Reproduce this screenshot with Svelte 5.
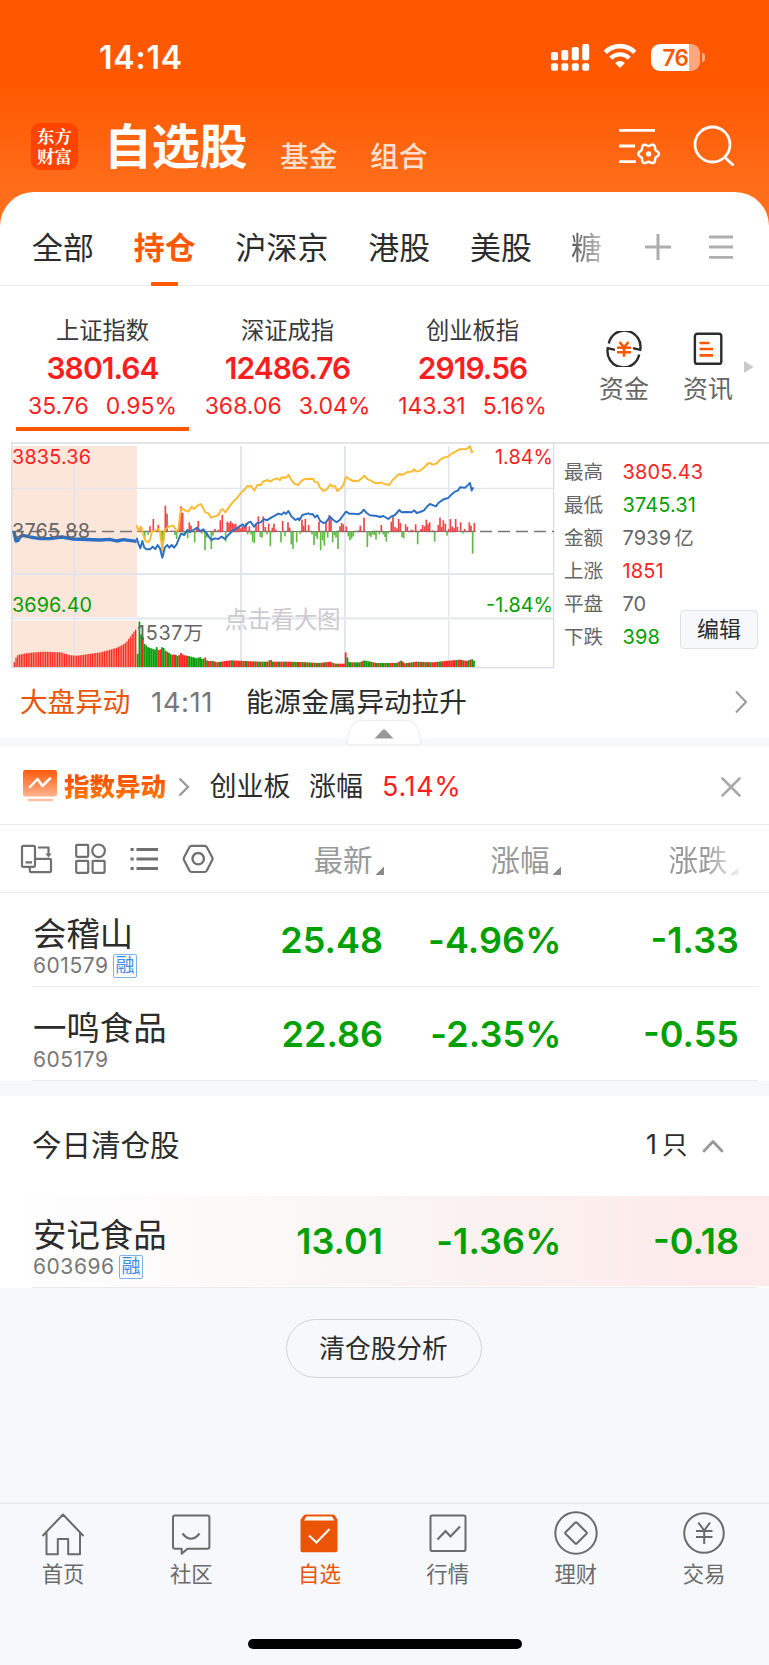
<script>
  const tabs = ['全部', '持仓', '沪深京', '港股', '美股', '糖'];
  const indices = [
    { name: '上证指数', value: '3801.64', diff: '35.76', pct: '0.95%' },
    { name: '深证成指', value: '12486.76', diff: '368.06', pct: '3.04%' },
    { name: '创业板指', value: '2919.56', diff: '143.31', pct: '5.16%' }
  ];
  const stats = [
    ['最高', '3805.43', 'up'],
    ['最低', '3745.31', 'down'],
    ['金额', '7939', '', '亿'],
    ['上涨', '1851', 'up'],
    ['平盘', '70', ''],
    ['下跌', '398', 'down']
  ];
  const holdings = [
    { name: '会稽山', code: '601579', margin: true, price: '25.48', pct: '-4.96%', diff: '-1.33' },
    { name: '一鸣食品', code: '605179', margin: false, price: '22.86', pct: '-2.35%', diff: '-0.55' }
  ];
  const cleared = { name: '安记食品', code: '603696', margin: true, price: '13.01', pct: '-1.36%', diff: '-0.18' };
  const nav = ['首页', '社区', '自选', '行情', '理财', '交易'];

  // Six-lobed gear outline centred on (cx, cy)
  function gear(cx, cy) {
    return Array.from({ length: 72 }, (_, i) => {
      const a = (i * Math.PI) / 36;
      const r = 9.1 + 1.2 * Math.cos(6 * a);
      return (cx + r * Math.cos(a)).toFixed(2) + ',' + (cy + r * Math.sin(a)).toFixed(2);
    }).join(' ');
  }

  // Chart series, in thirds of a pixel
  const preLine = '42,290 48,318 54,316 60,306 68,301 90,306 120,311 150,311 185,306 220,312 300,315 330,313 350,318 370,314 410,319';
  const blue = '410,308 415,325 421,340 427,318 433,338 440,343 450,343 458,335 466,342 473,330 480,340 487,368 495,337 502,330 508,338 515,330 522,338 530,328 537,310 543,296 553,300 562,285 570,292 580,285 592,278 600,288 610,283 620,296 634,315 645,310 655,312 665,305 675,312 685,300 695,290 705,283 718,275 728,268 735,275 745,262 752,260 762,275 770,265 782,262 792,252 800,256 815,247 825,242 835,236 845,239 852,232 858,237 865,228 875,245 887,255 895,250 898,256 907,240 925,235 932,238 938,237 945,247 952,241 960,257 970,264 978,262 990,245 1000,255 1010,262 1020,254 1028,243 1038,230 1048,236 1060,236 1075,238 1085,232 1091,224 1100,234 1110,241 1130,243 1140,246 1150,243 1165,252 1175,244 1185,240 1198,225 1205,232 1220,231 1235,232 1243,226 1250,234 1260,231 1272,226 1280,216 1290,207 1300,211 1308,214 1315,204 1325,197 1335,191 1343,190 1355,178 1365,170 1375,166 1380,157 1395,158 1402,152 1410,144 1415,167 1420,157';
  const yellow = '410,270 415,287 422,275 430,300 437,318 443,322 450,315 456,290 465,288 475,282 480,290 487,345 494,285 505,275 520,272 530,288 535,285 540,240 545,220 555,226 565,230 575,215 582,222 592,212 602,207 610,220 616,232 625,235 633,248 645,244 655,240 663,225 668,222 676,232 690,212 700,200 710,190 722,175 735,162 742,153 748,155 753,152 763,167 772,150 783,150 788,140 803,135 810,140 820,134 832,130 840,136 845,127 858,128 866,120 874,135 883,146 895,150 905,137 915,132 930,131 940,132 943,140 953,142 958,155 970,168 980,164 991,148 998,155 1005,153 1012,168 1022,160 1030,150 1038,125 1047,132 1060,138 1075,138 1085,130 1093,122 1102,132 1112,137 1125,144 1135,145 1142,142 1150,146 1167,150 1178,135 1197,117 1207,120 1220,112 1235,110 1243,103 1248,110 1260,107 1273,97 1282,87 1290,84 1298,89 1310,86 1318,76 1330,68 1343,65 1355,56 1367,50 1378,43 1400,42 1410,34 1415,52 1420,48';
  const momentum = [
    [424, 14], [434, -24], [445, -10], [450, 16], [460, 38], [475, 20], [482, -20], [487, -60], [492, -25], [496, 78], [501, 54],
    [515, 4], [525, -10], [530, -22], [538, 30], [543, 76], [548, 56], [553, -10], [563, -20], [568, 28], [573, 18], [584, -32],
    [590, 14], [595, 32], [605, -6], [615, -56], [620, -18], [634, -52], [639, -12], [645, 8], [655, 6], [661, 34], [667, 50],
    [677, -30], [682, 30], [687, 26], [692, 32], [697, 26], [702, 22], [707, 24], [712, 14], [717, 18], [722, 10], [727, 16],
    [732, 18], [738, 26], [743, -8], [748, 16], [753, -8], [758, -30], [763, -34], [768, 22], [775, 46], [781, -16], [786, -18],
    [790, 46], [796, 14], [801, -8], [806, 24], [811, -44], [817, 12], [822, 24], [828, 6], [843, -32], [848, 32], [855, -14],
    [864, 28], [869, 12], [874, -38], [879, -52], [890, -32], [900, -6], [906, 36], [911, 18], [916, 38], [926, 20], [936, -8],
    [942, -40], [948, -14], [952, -22], [957, 30], [962, -56], [968, -26], [973, -42], [978, 30], [983, -18], [988, 50], [993, 40],
    [998, -32], [1003, -10], [1008, -18], [1014, -52], [1020, 16], [1025, 26], [1030, 22], [1039, 16], [1045, -14], [1050, -26],
    [1055, -20], [1060, -14], [1077, 4], [1081, 18], [1092, 42], [1102, -46], [1108, -12], [1113, -16], [1118, -8], [1123, -10],
    [1128, -24], [1138, -8], [1144, 20], [1150, -8], [1155, -16], [1159, -30], [1165, -6], [1174, 30], [1179, 46], [1185, 14],
    [1191, 10], [1196, 38], [1201, 26], [1206, -16], [1211, -20], [1217, 22], [1222, 14], [1232, 4], [1237, 6], [1247, 22],
    [1253, -38], [1263, 8], [1268, 20], [1274, 16], [1279, 36], [1284, 22], [1289, 28], [1299, 4], [1304, -30], [1315, 20],
    [1320, 42], [1325, 14], [1330, 34], [1336, 24], [1341, -12], [1346, 8], [1351, 38], [1357, 16], [1362, 10], [1367, 38],
    [1372, 14], [1382, 28], [1388, -6], [1394, 8], [1408, 28], [1413, 18], [1418, -66], [1423, 26]
  ];
  const preKnots = [[40, 12], [46, 28], [52, 36], [80, 42], [130, 46], [180, 44], [210, 35], [230, 34], [300, 44], [350, 58], [375, 72], [390, 92], [404, 112]];
  const volKnots = [
    [413, 40], [418, 138], [423, 98], [428, 92], [433, 70], [438, 66], [443, 60], [465, 52], [470, 60], [477, 48], [488, 62],
    [497, 48], [505, 44], [515, 36], [525, 38], [535, 32], [543, 42], [550, 36], [570, 32], [590, 26], [600, 30], [608, 22],
    [615, 30], [622, 18], [640, 18], [650, 14], [690, 20], [780, 16], [805, 16], [811, 24], [817, 16], [860, 16], [900, 15],
    [940, 13], [960, 12], [990, 16], [1005, 10], [1033, 10], [1038, 52], [1043, 24], [1048, 14], [1080, 14], [1092, 20],
    [1130, 12], [1190, 12], [1205, 20], [1213, 11], [1250, 16], [1300, 14], [1335, 18], [1380, 22], [1400, 18], [1416, 24], [1423, 18]
  ];
  const volColors = 'gggrggggggggrrgggrggrrggrrrrrggggggggggrgrrgrrgrgrrrrrrgrrrrgrrgrrrgrrgrggrrgrgrrgrrrgrrrgrggrrgrggrgrgrggrrgrrrgrrgrrrrrgggrgggrgrggggrgrgrgggrggrrggrrgrrgrgrgrrgrgrrgrgrrrrggrrrrrrrrgrrgrrrgr';
  function sample(knots, x) {
    for (let i = 1; i < knots.length; i++) {
      const [x0, y0] = knots[i - 1];
      const [x1, y1] = knots[i];
      if (x <= x1) return y0 + ((y1 - y0) * (x - x0)) / (x1 - x0);
    }
    return knots[knots.length - 1][1];
  }
  const preVol = Array.from({ length: 71 }, (_, i) => 41 + i * 5.2).map((x) => [x, sample(preKnots, x)]);
  const vol = Array.from({ length: 195 }, (_, i) => 413 + i * 5.2).map((x, i) => [x, sample(volKnots, x), volColors[i % volColors.length]]);
</script>

{#snippet stock(s)}
  <div class="who">
    <div class="nm">{s.name}</div>
    <div class="code"><span>{s.code}</span>{#if s.margin}<i>融</i>{/if}</div>
  </div>
  <b class="c1">{s.price}</b>
  <b class="c2">{s.pct}</b>
  <b class="c3">{s.diff}</b>
{/snippet}

<div class="screen">
  <header>
    <div class="status">
      <span class="time">14:14</span>
      <svg class="signal" width="40" height="28" viewBox="551 44 40 28" fill="#fff">
        <rect x="551" y="52" width="7" height="8.300" rx="2" /><rect x="561.300" y="50" width="7" height="10.300" rx="2" />
        <rect x="571.800" y="47" width="7" height="13.300" rx="2" /><rect x="582.200" y="44" width="7" height="16.300" rx="2" />
        <rect x="551" y="63.300" width="7" height="7.500" rx="2" /><rect x="561.300" y="63.300" width="7" height="7.500" rx="2" />
        <rect x="571.800" y="63.300" width="7" height="7.500" rx="2" /><rect x="582.200" y="63.300" width="7" height="7.500" rx="2" />
      </svg>
      <svg class="wifi" width="34" height="26" viewBox="0 0 34 26" fill="none" stroke="#fff">
        <path d="M2.300 9.300a20.500 20.500 0 0 1 29.400 0" stroke-width="4.600" />
        <path d="M7.800 15.300a12.800 12.800 0 0 1 18.400 0" stroke-width="4.300" />
        <path d="M17 25l-4.900-5a7 7 0 0 1 9.800 0z" fill="#fff" stroke="none" />
      </svg>
      <div class="battery"><span>76</span></div><div class="cap"></div>
    </div>
    <div class="bar">
      <div class="logo">东方<br />财富</div>
      <h1>自选股</h1>
      <span class="sub">基金</span>
      <span class="sub s2">组合</span>
      <svg class="manage" width="42" height="38" viewBox="0 0 42 38" fill="none" stroke="#fff" stroke-width="2.800">
        <path d="M0 2.400h36M0 18h16M0 33.600h17" />
        <polygon points={gear(29.6, 25.9)} stroke-width="2.500" stroke-linejoin="round" />
        <circle cx="29.600" cy="25.900" r="2.600" fill="#fff" stroke="none" />
      </svg>
      <svg class="search" width="43" height="43" viewBox="0 0 43 43" fill="none" stroke="#fff" stroke-width="2.800"><circle cx="19.500" cy="19.500" r="17.500" /><path d="M32 32.500l8.500 8" /></svg>
    </div>
  </header>

  <main>
    <nav class="tabs">
      {#each tabs as t, i}
        <span class:on={i === 1} class:fade={i === 5}>{t}</span>
      {/each}
      <svg class="plus" width="26" height="26" viewBox="0 0 26 26" stroke="#aeaeae" stroke-width="3"><path d="M0 13h26M13 0v26" /></svg>
      <svg class="menu" width="24" height="24" viewBox="0 0 24 24" stroke="#aeaeae" stroke-width="2.800"><path d="M0 2h24M0 12h24M0 22.400h24" /></svg>
    </nav>

    <section class="indices">
      {#each indices as x, i}
        <div class="idx" class:sel={i === 0}>
          <div class="iname">{x.name}</div>
          <div class="ival">{x.value}</div>
          <div class="ichg"><span>{x.diff}</span><span>{x.pct}</span></div>
        </div>
      {/each}
      <div class="tool t1">
        <svg width="36" height="36" viewBox="0 0 36 36" fill="none" stroke="#2c2c2c" stroke-width="2.400">
          <path d="M2.800 12.500A16 16 0 0 1 34.200 18.800l-7.200-1.600" />
          <path d="M33.200 23.500A16 16 0 0 1 1.800 17.200l7.200 1.600" />
          <path d="M13.500 11l4.500 5.400 4.500-5.400M11 16.800h14M11 21.200h14M18 16v9.800" stroke="#ff5800" stroke-width="2.600" />
        </svg>
        <span>资金</span>
      </div>
      <div class="tool t2">
        <svg width="30" height="36" viewBox="0 0 30 36" fill="none" stroke="#2c2c2c" stroke-width="2.400">
          <rect x="1.900" y="2.800" width="26.400" height="30" rx="2.400" />
          <path d="M6.500 12h10M6.500 18h13.500M6.500 24.400h13.500" stroke="#ff5800" stroke-width="2.600" />
        </svg>
        <span>资讯</span>
      </div>
      <svg class="more" width="10" height="14" viewBox="0 0 10 14"><path d="M0 1v12l9.500-6z" fill="#c9c9c9" /></svg>
    </section>

    <section class="market">
      <svg class="chart" width="545" height="228" viewBox="11 442 545 228">
        <rect x="12" y="446" width="125" height="171" fill="#fce5d9" />
        <rect x="12" y="620.500" width="125" height="47" fill="#fce5d9" />
        <g stroke="#e2e5ed" fill="none">
          <path d="M74.500 446V667" stroke-width="1.400" />
          <path d="M241 446V617M241 620V667M345 446V617M345 620V667" stroke-width="2" />
          <path d="M448.700 446V617M448.700 620V667" stroke-width="1.400" />
          <path d="M12 488.400H554" stroke-width="1.400" />
          <path d="M12 574H554M12 618.600H554" stroke-width="2" />
          <path d="M11.700 443V667.600H553.600V443" stroke="#dadce4" stroke-width="1.300" />
        </g>
        <text x="224.500" y="627.500" class="mark" textLength="116">点击看大图</text>
        <path d="M12 531.500H554" stroke="#777" stroke-width="1.300" stroke-dasharray="12 6" />
        <path d="M137 531.500H476" stroke="#777" stroke-width="1" />
        <g transform="translate(0 435) scale(.33333)">
          {#each momentum as [x, h]}
            <rect x={x - 2.5} y={h > 0 ? 290 - h : 290} width="5" height={Math.abs(h)} fill={h > 0 ? '#ee4444' : '#5fbb44'} />
          {/each}
          {#each preVol as [x, h]}
            <rect {x} y={696 - h} width="4" height={h} fill="#fb2c22" />
          {/each}
          {#each vol as [x, h, c]}
            <rect x={x - 2.6} y={696 - h} width="5.300" height={h} fill={c === 'r' ? '#fa2323' : '#07a007'} />
          {/each}
          <g fill="none" stroke-linejoin="round">
            <polyline points={preLine} stroke="#2b6fc4" stroke-width="10" />
            <polyline points={yellow} stroke="#fdba31" stroke-width="5.800" />
            <polyline points={blue} stroke="#2b6fc4" stroke-width="5.800" />
          </g>
        </g>
        <g class="lab">
          <text x="12" y="463.500" fill="#fa1e1e" textLength="79">3835.36</text>
          <text x="12" y="537.500" fill="#666" textLength="78">3765.88</text>
          <text x="12" y="611.500" fill="#00a000" textLength="80">3696.40</text>
          <text x="137" y="639.500" fill="#666" textLength="66">1537万</text>
          <text x="495" y="463.500" fill="#fa1e1e" textLength="58">1.84%</text>
          <text x="486" y="611.500" fill="#00a000" textLength="67">-1.84%</text>
        </g>
      </svg>
      <div class="stats">
        {#each stats as [k, v, c, unit]}
          <div><span>{k}</span><em class={c}>{v}</em>{#if unit}<em class="unit">{unit}</em>{/if}</div>
        {/each}
      </div>
      <button class="edit">编辑</button>
    </section>

    <section class="alert">
      <span class="a1">大盘异动</span><span class="a2">14:11</span><span class="a3">能源金属异动拉升</span>
      <svg width="14" height="24" viewBox="0 0 14 24" fill="none" stroke="#999" stroke-width="2"><path d="M2 1.500l10 10.500-10 10.500" /></svg>
      <svg class="handle" width="76" height="28" viewBox="0 0 76 28">
        <path d="M1 25.500Q2.500 12 5 8Q8.500 1.500 17 1.500H59Q67.500 1.500 71 8Q73.500 12 75 25.500z" fill="#fff" stroke="#f0f0f2" stroke-width="1.400" />
        <path d="M28.500 19.500h19l-8-8.500q-1.500-1.200-3 0z" fill="#999" />
      </svg>
    </section>

    <section class="move">
      <svg class="mi" width="36" height="34" viewBox="0 0 36 34" fill="none">
        <defs><linearGradient id="g" x2="0" y2="1"><stop stop-color="#ff5a0c" /><stop offset="1" stop-color="#ffb48f" /></linearGradient></defs>
        <rect x="1" y="1" width="34" height="26.500" rx="2.500" fill="url(#g)" />
        <path d="M8 18l7.500-8 5 7L28 9.500" stroke="#fff" stroke-width="2.500" stroke-linecap="round" stroke-linejoin="round" />
        <path d="M6.500 31h23.500" stroke="#ffc0a2" stroke-width="2.400" stroke-linecap="round" />
      </svg>
      <strong>指数异动</strong>
      <svg class="mc" width="12" height="20" viewBox="0 0 12 20" fill="none" stroke="#999" stroke-width="2.300"><path d="M1.500 1.500L10 10l-8.500 8.500" /></svg>
      <span class="m1">创业板</span><span class="m2">涨幅</span><span class="m3">5.14%</span>
      <svg class="mx" width="20" height="20" viewBox="0 0 20 20" stroke="#aaa" stroke-width="2.600" stroke-linecap="round"><path d="M1.500 1.500l17 17M18.500 1.500l-17 17" /></svg>
    </section>

    <section class="cols">
      <svg width="194" height="32" viewBox="20 843 194 32" fill="none" stroke="#707070" stroke-width="2.200">
        <rect x="22" y="845.800" width="13" height="21" rx="1.500" />
        <path d="M25.500 862.300h6.500M38 847.500h10.500v7M29.800 868v2.500q0 1.600 1.600 1.600h18q1.600 0 1.600-1.600v-10q0-1.600-1.600-1.600H35" />
        <path d="M45.400 853.500h6.200l-3.100 4z" fill="#707070" stroke="none" />
        <rect x="76.200" y="844.800" width="12" height="12" rx="1" /><circle cx="98.600" cy="850.800" r="6.300" />
        <rect x="76.200" y="860.800" width="12" height="12" rx="1" /><rect x="92.600" y="860.800" width="12" height="12" rx="1" />
        <g stroke-width="3"><path d="M136.500 849.500H158M136.500 859H158M136.500 868.400H158M130.500 849.500h3.200M130.500 859h3.200M130.500 868.400h3.200" /></g>
        <path d="M191.500 845.800h13.200q1.300 0 2 1.200l5.600 10.600q.6 1.200 0 2.400l-5.600 10.800q-.7 1.200-2 1.200h-13.200q-1.300 0-2-1.200l-5.500-10.800q-.6-1.200 0-2.400l5.500-10.600q.7-1.200 2-1.200z" />
        <circle cx="198.200" cy="858.700" r="5.700" stroke-width="2.400" />
      </svg>
      <div class="h c1"><span>最新</span><i></i></div>
      <div class="h c2"><span>涨幅</span><i></i></div>
      <div class="h c3 dim"><span>涨跌</span><i></i></div>
    </section>

    {#each holdings as s}
      <section class="row">{@render stock(s)}</section>
    {/each}

    <section class="clear">
      <span>今日清仓股</span>
      <span class="cnt"><em>1</em>只</span>
      <svg width="22" height="14" viewBox="0 0 22 14" fill="none" stroke="#999" stroke-width="2.800" stroke-linecap="round" stroke-linejoin="round"><path d="M2 12l9-9.500L20 12" /></svg>
    </section>
    <section class="row pink">{@render stock(cleared)}</section>

    <div class="rest"><button>清仓股分析</button></div>
  </main>

  <footer>
    <div class="nav">
      {#each nav as n, i}
        <div class="item" class:act={i === 2}>
          <svg width="46" height="46" viewBox="0 0 46 46" fill="none" stroke="#6b6b6b" stroke-width="2">
            {#if i === 0}
              <path d="M2.500 26L23 4.500 43.500 26M6.500 22v22.300H17.800V29h10.400v15.300H40V22" stroke-linejoin="round" />
            {:else if i === 1}
              <path d="M7 5.500h32.400q2 0 2 2v29.300q0 2-2 2H19.500l-5.800 5v-5H7q-2 0-2-2V7.500q0-2 2-2z" stroke-linejoin="round" />
              <path d="M14.500 23.500q8.500 10.500 17 0" stroke-width="2.200" />
            {:else if i === 2}
              <path d="M9.500 4.500h27.500q1.500 0 2.300 1.500l2.200 3.800v30.500q0 2-2 2H6.500q-2 0-2-2V9.800l2.700-3.800q1-1.500 2.300-1.500z" fill="#ea5404" stroke="none" />
              <path d="M10.500 6.500h25.500l2.300 4H8z" fill="#fff" stroke="none" />
              <path d="M13 25.500l7.500 7L33.500 19" stroke="#fff" stroke-width="2" />
            {:else if i === 3}
              <rect x="5.500" y="5.500" width="35" height="35.500" rx="1.800" />
              <path d="M12.500 29.500l8-8.500 5 5.500L35 16.500" stroke-width="2.200" />
            {:else if i === 4}
              <circle cx="23" cy="23" r="20.700" />
              <path d="M23.700 12.500q-.7-.7-1.400 0L12.500 22.300q-.7.7 0 1.400L22.300 33.500q.7.700 1.400 0L33.500 23.700q.7-.7 0-1.400z" />
            {:else}
              <circle cx="23" cy="23" r="19.800" />
              <path d="M17.300 12.500l5.900 8 5.900-8M15 21h16.500M15 27h16.500M23.200 20.500V34" />
            {/if}
          </svg>
          <span>{n}</span>
        </div>
      {/each}
    </div>
    <div class="home"></div>
  </footer>
</div>

<style>
  :global(body) { background: #f7f8fb; }
  .screen { width: 769px; height: 1665px; overflow: hidden; display: flex; flex-direction: column; background: linear-gradient(#ff5800 85px, #ff6e1b 190px, #ff6e1b 240px, #f7f8fb 240px); font-family: Inter, "Noto Sans CJK SC", sans-serif; color: #2c2c2c; }
  .screen * { box-sizing: border-box; }
  svg { flex: none; display: block; }
  span, b, strong, em, h1 { white-space: nowrap; }
  em, i { font-style: normal; }
  header { height: 192px; flex: none; }
  .status { height: 85px; display: flex; padding-left: 99px; align-items: flex-start; color: #fff; }
  .time { font-size: 32px; font-weight: 600; line-height: 40px; width: 452px; margin-top: 38px; letter-spacing: .8px; }
  .signal { margin-top: 44px; }
  .wifi { margin: 43px 0 0 12px; }
  .battery { margin: 44px 0 0 14px; width: 49px; height: 27px; border-radius: 9px; background: linear-gradient(90deg, #fff 38px, #ffa880 38px); color: #ff5800; font-size: 22.500px; font-weight: 600; line-height: 27px; text-align: center; letter-spacing: -.6px; }
  .cap { width: 2.500px; height: 9px; margin: 53px 0 0 2px; background: #ffa880; border-radius: 0 3px 3px 0; }
  .bar { display: flex; padding-left: 31px; color: #fff; height: 106px; }
  .logo { width: 47px; height: 47px; margin-top: 38px; border-radius: 9px; background: #ff4400; font: 700 17.500px/20px "Noto Serif CJK SC", "Noto Sans CJK SC", serif; text-align: center; padding-top: 3px; }
  h1 { margin: 32px 0 0 26px; font-size: 48px; line-height: 60px; font-weight: 600; width: 176px; letter-spacing: -.2px; }
  .sub { margin-top: 51.500px; font-size: 28.800px; line-height: 40px; color: #ffdfce; width: 90px; font-weight: 500; }
  .s2 { width: 249px; }
  .manage { margin-top: 43px; }
  .search { margin: 40px 0 0 32px; }

  main { flex: none; background: #fff; border-radius: 34px 34px 0 0; height: 1311px; display: flex; flex-direction: column; }
  main > * { flex: none; }
  .tabs { height: 94px; display: flex; padding-left: 32px; border-bottom: 1.500px solid #ececee; font-size: 30.900px; line-height: 40px; gap: 40px; padding-top: 35.500px; }
  .tabs .on { color: #ff5800; font-weight: 600; position: relative; }
  .tabs .on::after { content: ''; position: absolute; left: 17.500px; top: 54.500px; width: 27px; height: 4px; border-radius: 1px; background: #ff5800; }
  .fade { background: linear-gradient(90deg, #555, #c4c4c4); -webkit-background-clip: text; background-clip: text; color: transparent; margin-left: -1px; }
  .plus { margin: 6.500px 0 0 3px; }
  .menu { margin: 7.500px 0 0 -2px; }

  .indices { height: 156px; display: flex; padding-left: 16px; color: #fa1e1e; }
  .idx { width: 173px; height: 145px; margin-right: 12px; display: flex; flex-direction: column; align-items: center; border-bottom: 4px solid transparent; }
  .idx.sel { border-color: #ff5800; }
  .iname { font-size: 23.300px; line-height: 30px; margin-top: 30px; color: #3a3a3a; }
  .ival { font-size: 30px; font-weight: 600; line-height: 36px; margin-top: 4px; letter-spacing: -.95px; }
  .ichg { font-size: 23px; line-height: 30px; margin-top: 5px; display: flex; gap: 17px; }
  .tool { display: flex; flex-direction: column; align-items: center; color: #666; font-size: 24.900px; line-height: 30px; padding-top: 45px; width: 50px; }
  .tool span { margin-top: 7px; }
  .t1 { margin-left: 28px; }
  .t2 { margin-left: 34px; }
  .more { margin: 74px 0 0 11px; }

  .market { height: 228px; display: flex; border-top: 2px solid #e2e4ea; margin-left: 11px; }
  .chart { margin-top: -2px; }
  .lab text { font-size: 19.800px; }
  .mark { font-size: 23.500px; fill: #cbcbcf; }
  .stats { padding-top: 12px; margin-left: 8px; font-size: 19.600px; color: #666; width: 116px; }
  .stats div { display: flex; height: 33.100px; line-height: 33px; }
  .stats span { width: 58.500px; flex: none; }
  .stats em { font-size: 20px; letter-spacing: .1px; }
  .stats .unit { font-size: 19.500px; margin-left: 3px; }
  .up { color: #fa2323; }
  .down { color: #00a000; }
  .edit { margin: 166px 0 0 0; width: 78px; height: 39px; border: 1.500px solid #dfe1e6; border-radius: 4px; background: #f7f8fb; font: 22px/30px "Noto Sans CJK SC", sans-serif; color: #2c2c2c; padding: 0 0 5px; }

  .alert { height: 76.500px; border-bottom: 9.500px solid #f7f8fb; display: flex; padding: 12px 0 0 20px; font-size: 27.600px; line-height: 40px; position: relative; }
  .a1 { color: #ea5404; width: 131px; }
  .a2 { color: #777; width: 95px; letter-spacing: .5px; }
  .a3 { width: 488px; }
  .alert > svg:not(.handle) { margin-top: 8px; }
  .handle { position: absolute; left: 346px; top: 49px; }
  .move { height: 78.500px; border-bottom: 1.500px solid #ececee; display: flex; padding-left: 22px; font-size: 27px; line-height: 40px; padding-top: 20.500px; }
  .mi { margin-top: 2px; }
  strong { font-size: 25.500px; font-weight: 900; margin-left: 6px; width: 114px; background: linear-gradient(#ff5000 20%, #ff9a14 80%); -webkit-background-clip: text; background-clip: text; color: transparent; }
  .mc { margin-top: 9.500px; }
  .m1 { margin-left: 19.500px; width: 99.500px; }
  .m2 { width: 73px; }
  .m3 { color: #fa1e1e; width: 339px; letter-spacing: .7px; }
  .mx { margin-top: 9.500px; }
  .cols { height: 68px; border-bottom: 1.500px solid #ececee; display: flex; padding-left: 20px; }
  .cols > svg { margin-top: 18px; }
  .h { display: flex; justify-content: flex-end; font-size: 29.500px; line-height: 40px; color: #999; padding-top: 15px; }
  .h i { width: 8px; height: 8px; margin: 27px 0 0 3px; background: linear-gradient(135deg, transparent 50%, #8a8a8a 50%); }
  .cols .c1 { width: 169.500px; }
  .cols .c2 { width: 177px; }
  .cols .c3 { width: 178px; }
  .dim { -webkit-mask-image: linear-gradient(90deg, #000 145px, rgba(0, 0, 0, .1) 178px); mask-image: linear-gradient(90deg, #000 145px, rgba(0, 0, 0, .1) 178px); }

  .row { display: flex; height: 94px; padding-left: 33px; background: linear-gradient(#ebebed, #ebebed) 32px 100% / 726px 1.500px no-repeat; }
  .who { width: 170px; }
  .nm { font-size: 33.400px; line-height: 40px; padding-top: 20.500px; }
  .code { display: flex; font-size: 21px; line-height: 24px; color: #777; letter-spacing: .55px; }
  .code i { width: 24px; height: 24px; margin-left: 4.500px; border: 1.500px solid #7fb0ea; color: #3d8be2; font-size: 19px; line-height: 21px; text-align: center; border-radius: 2px; letter-spacing: 0; }
  .row b { font-size: 36px; font-weight: 600; line-height: 44px; color: #00a000; text-align: right; margin-top: 24.500px; }
  .row .c1 { width: 180px; }
  .row .c2 { width: 178.500px; letter-spacing: .1px; }
  .row .c3 { width: 177.500px; }
  .clear { height: 115px; border-top: 15px solid #f7f8fb; display: flex; padding: 29px 0 0 32px; font-size: 29.500px; line-height: 40px; }
  .clear > span:first-child { width: 614px; }
  .cnt { font-size: 25.500px; width: 56px; }
  .cnt em { font-size: 27px; margin-right: 5px; }
  .clear svg { margin-top: 14px; }
  .pink { height: 92px; background: linear-gradient(#ebebed, #ebebed) 32px 100% / 726px 1.500px no-repeat, linear-gradient(90deg, #fff, #f9f5f4 50%, #fdecec 85%, #fdeaea) 0 0 / 100% 90px no-repeat; }
  .pink .nm { padding-top: 18.500px; }
  .pink b { margin-top: 22.500px; }
  .rest { flex: 1; background: #f7f8fb; display: flex; justify-content: center; padding: 31px 2px 0 0; }
  .rest button { width: 196px; height: 59px; border: 1.500px solid #d2d3d6; border-radius: 30px; background: transparent; font: 25.700px/50px "Noto Sans CJK SC", sans-serif; color: #2c2c2c; padding: 0 0 4px; }

  footer { flex: none; height: 162px; border-top: 1.500px solid #e6e7ea; background: #f7f8fb; display: flex; flex-direction: column; align-items: center; }
  .nav { display: grid; grid-template-columns: repeat(6, 128.200px); height: 135px; width: 769px; margin-left: -2px; }
  .item { display: flex; flex-direction: column; align-items: center; padding-top: 6px; color: #6b6b6b; font-size: 21.400px; line-height: 28px; }
  .item span { margin-top: 4px; }
  .act { color: #ea5404; }
  .home { width: 274px; height: 10px; border-radius: 5px; background: #000; }
</style>
